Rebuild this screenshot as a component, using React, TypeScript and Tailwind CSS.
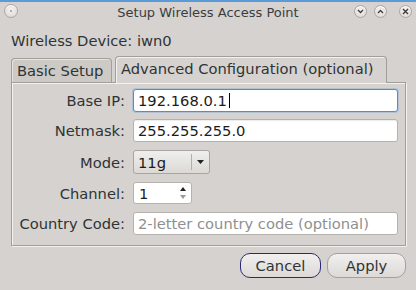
import React from "react";

function Circle({ size = 13, children }: { size?: number; children?: React.ReactNode }) {
  return (
    <div
      className="flex items-center justify-center rounded-full border border-[#aaa6a2] bg-[radial-gradient(circle_at_50%_40%,#f4f3f2,#d9d6d3)] shadow-[inset_0_1px_0_#ffffff]"
      style={{ width: size, height: size }}
    >
      {children}
    </div>
  );
}

function Row({ label, mt, h, children }: { label: string; mt: string; h: string; children: React.ReactNode }) {
  return (
    <div className={`flex items-center ${mt} ${h}`}>
      <div className="w-[107px] text-right leading-[17px]">{label}</div>
      <div className="ml-[8px] flex-1 flex items-center h-full">{children}</div>
    </div>
  );
}

export default function App() {
  return (
    <div className="w-[416px] h-[290px] overflow-hidden bg-[#d6d2cf] text-[#2e3436] font-['DejaVu_Sans',sans-serif] text-[14.7px] flex flex-col">
      <div className="h-[2px] bg-[#5a9ad8]" />
      {/* Title bar */}
      <div className="h-[22px] grid grid-cols-[1fr_auto_1fr]">
        <div className="pl-[4px] pt-[2px]">
          <Circle size={14}>
            <div className="w-[2px] h-[2px] rounded-full bg-[#9a9693]" />
          </Circle>
        </div>
        <div className="pt-[3px] text-[13px] leading-[15px] text-[#3a3d3f]">Setup Wireless Access Point</div>
        <div className="flex justify-end pr-[4px] pt-[3px]">
          <Circle>
            <svg width="7" height="5" viewBox="0 0 7 5">
              <path d="M1 1 L3.5 3.5 L6 1" fill="none" stroke="#3c3c3c" strokeWidth="1.3" />
            </svg>
          </Circle>
          <div className="w-[7px]" />
          <Circle>
            <svg width="7" height="5" viewBox="0 0 7 5">
              <path d="M1 4 L3.5 1.5 L6 4" fill="none" stroke="#3c3c3c" strokeWidth="1.3" />
            </svg>
          </Circle>
          <div className="w-[12px]" />
          <Circle>
            <svg width="7" height="7" viewBox="0 0 7 7">
              <path d="M1 1 L6 6 M6 1 L1 6" fill="none" stroke="#3c3c3c" strokeWidth="1.4" />
            </svg>
          </Circle>
        </div>
      </div>

      {/* Device label */}
      <div className="ml-[11px] mt-[8px] leading-[17px]">Wireless Device: iwn0</div>

      {/* Tabs */}
      <div className="mt-[7px] ml-[11px] flex items-end h-[26px] relative z-10">
        <div className="w-[101px] h-[24px] rounded-t-[4px] border border-b-0 border-[#a29e9a] bg-[#cdc9c5] shadow-[inset_1px_1px_0_#e6e3e0] pl-[5px] pt-[3px] leading-[17px]">
          Basic Setup
        </div>
        <div className="ml-[3px] w-[272px] h-[27px] -mb-[1px] rounded-t-[4px] border border-b-0 border-[#a29e9a] bg-[#d6d2cf] shadow-[inset_1px_1px_0_#f4f2f0] pl-[5px] pt-[3px] leading-[17px]">
          Advanced Configuration (optional)
        </div>
      </div>

      {/* Panel */}
      <div className="ml-[11px] w-[395px] border border-[#a29e9a] shadow-[inset_1px_1px_0_#f4f2f0,1px_1px_0_#f4f2f0] pl-[6px] pr-[7px] pt-[6px] pb-[10px] flex flex-col">
        <Row label="Base IP:" mt="mt-0" h="h-[23px]">
          <div className="w-full h-[23px] rounded-[3px] border border-[#4a90d9] bg-white shadow-[0_0_0_1px_rgba(74,144,217,0.25)] pl-[4px] flex items-center leading-[17px] text-[#1c1c1c]">
            192.168.0.1
            <span className="inline-block w-px h-[15px] bg-black ml-[2px]" />
          </div>
        </Row>
        <Row label="Netmask:" mt="mt-[7px]" h="h-[23px]">
          <div className="w-full h-[23px] rounded-[3px] border border-[#b5b1ad] bg-white shadow-[inset_0_1px_1px_rgba(0,0,0,0.08)] pl-[4px] flex items-center leading-[17px] text-[#1c1c1c]">
            255.255.255.0
          </div>
        </Row>
        <Row label="Mode:" mt="mt-[8px]" h="h-[24px]">
          <div className="w-[77px] h-[24px] rounded-[3px] border border-[#a8a4a0] bg-[linear-gradient(#f0efed,#dcd9d5)] flex items-center">
            <div className="pl-[4px] flex-1 leading-[17px] text-[#1c1c1c]">11g</div>
            <div className="w-px h-[16px] bg-[#b3afab]" />
            <div className="w-[17px] flex justify-center">
              <svg width="7" height="4" viewBox="0 0 7 4">
                <path d="M0 0 L7 0 L3.5 4 Z" fill="#222" />
              </svg>
            </div>
          </div>
        </Row>
        <Row label="Channel:" mt="mt-[8px]" h="h-[22px]">
          <div className="w-[59px] h-[22px] rounded-[3px] border border-[#b5b1ad] bg-white pl-[5px] flex items-center leading-[17px] text-[#1c1c1c]">
            <span className="flex-1">1</span>
            <div className="w-[14px] flex flex-col items-center gap-[4px] pr-[2px]">
              <svg width="6" height="4" viewBox="0 0 6 4">
                <path d="M0 4 L6 4 L3 0 Z" fill="#222" />
              </svg>
              <svg width="6" height="4" viewBox="0 0 6 4">
                <path d="M0 0 L6 0 L3 4 Z" fill="#9a9a9a" />
              </svg>
            </div>
          </div>
        </Row>
        <Row label="Country Code:" mt="mt-[8px]" h="h-[23px]">
          <div className="w-full h-[23px] rounded-[3px] border border-[#b5b1ad] bg-white pl-[4px] flex items-center leading-[17px] text-[#8e9090]">
            2-letter country code (optional)
          </div>
        </Row>
      </div>

      {/* Buttons */}
      <div className="mt-[7px] flex justify-end pr-[10px] gap-[6px]">
        <button className="w-[81px] h-[25px] rounded-[10px] border-[1.5px] border-[#2b2a78] bg-[linear-gradient(#f1f0ee,#dcd9d6)] leading-[17px] text-[#2e3436]">
          Cancel
        </button>
        <button className="w-[79px] h-[25px] rounded-[10px] border border-[#a4a09c] bg-[linear-gradient(#f1f0ee,#dcd9d6)] leading-[17px] text-[#2e3436]">
          Apply
        </button>
      </div>
    </div>
  );
}
